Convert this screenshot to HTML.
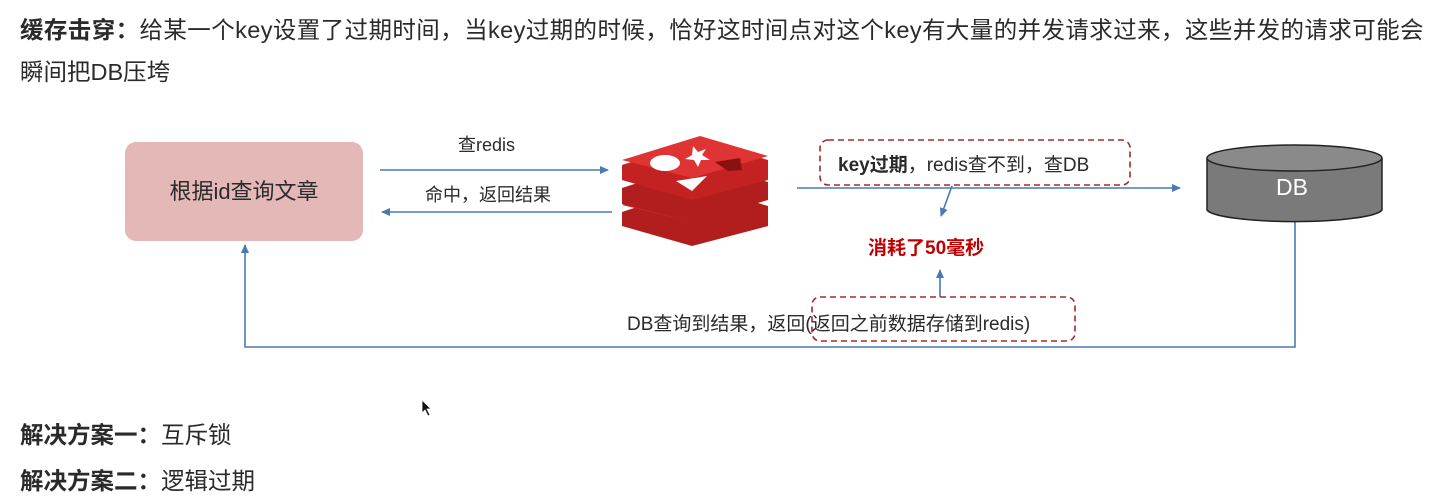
<!DOCTYPE html>
<html><head><meta charset="utf-8"><style>
body{margin:0;width:1444px;height:503px;background:#fff;position:relative;overflow:hidden;font-family:"Liberation Sans","Noto Sans CJK SC",sans-serif;color:#2a2a2a}
.t{position:absolute;white-space:nowrap}
.big{font-size:23.5px}
b{font-weight:bold;color:#2a2a2a}
</style></head><body>
<div class="t big" style="left:20px;top:11px;letter-spacing:0.4px">
<b>缓存击穿：</b>给某一个key设置了过期时间，当key过期的时候，恰好这时间点对这个key有大量的并发请求过来，这些并发的请求可能会</div>
<div class="t big" style="left:20px;top:53px;">瞬间把DB压垮</div>

<svg width="1444" height="503" style="position:absolute;left:0;top:0">
<defs>
<marker id="a" markerWidth="10" markerHeight="10" refX="8" refY="5" orient="auto" markerUnits="userSpaceOnUse"><path d="M0,1 L9,5 L0,9z" fill="#4a7ab5"/></marker>
</defs>
<rect x="125" y="142" width="238" height="99" rx="11" fill="#e5b8b8"/>
<g stroke="#4a7ab5" stroke-width="1.6" fill="none">
<line x1="380" y1="170" x2="608" y2="170" marker-end="url(#a)"/>
<line x1="612" y1="212" x2="382" y2="212" marker-end="url(#a)"/>
<line x1="797" y1="188" x2="1180" y2="188" marker-end="url(#a)"/>
<line x1="952" y1="186" x2="941" y2="216" marker-end="url(#a)"/>
<line x1="940" y1="297" x2="940" y2="270" marker-end="url(#a)"/>
<polyline points="1295,222 1295,347 245,347 245,245" marker-end="url(#a)"/>
</g>
<rect x="820" y="140" width="310" height="45" rx="8" fill="none" stroke="#a52a2a" stroke-width="1.6" stroke-dasharray="6,4"/>
<rect x="812" y="297" width="263" height="44" rx="8" fill="none" stroke="#a52a2a" stroke-width="1.6" stroke-dasharray="6,4"/>
<path d="M1207,158 L1207,210 A88,13 0 0 0 1382,210 L1382,158" fill="#7a7a7a" stroke="#222" stroke-width="1.5"/>
<ellipse cx="1294.5" cy="158" rx="87.5" ry="13" fill="#8a8a8a" stroke="#222" stroke-width="1.5"/>
<g>
<path d="M622,212 L700,186 L768,206 L768,226 L692,246 L622,226z" fill="#b21d1d"/>
<path d="M622,205 L700,180 L768,198 L692,222 z" fill="#d82c2c"/>
<path d="M622,188 L700,163 L768,182 L768,200 L692,222 L622,204z" fill="#b21d1d"/>
<path d="M622,180 L700,156 L768,175 L692,198 z" fill="#d82c2c"/>
<path d="M622,165 L700,140 L768,160 L768,180 L692,200 L622,180z" fill="#c42222"/>
<path d="M622,160 L700,136 L768,156 L692,178 z" fill="#e03434"/>
<ellipse cx="665" cy="163" rx="15" ry="8" fill="#fff"/>
<path d="M676,181 L707,176 L692,191z" fill="#fff"/>
<path d="M693,146 L698,152 L706,149 L702,155 L710,160 L701,160 L698,167 L694,160 L685,159 L692,155z" fill="#fff"/>
<path d="M715,162 L740,158 L742,170 L728,171z" fill="#8b1010"/>
</g>
</svg>

<div class="t" style="left:125px;top:142px;width:238px;height:99px;line-height:99px;text-align:center;font-size:22px">根据id查询文章</div>
<div class="t" style="left:458px;top:131px;font-size:18px">查redis</div>
<div class="t" style="left:425px;top:181px;font-size:18px">命中，返回结果</div>
<div class="t" style="left:838px;top:150px;font-size:19px"><b>key过期</b>，redis查不到，查DB</div>
<div class="t" style="left:868px;top:233px;font-size:19px;font-weight:bold;color:#c00000">消耗了50毫秒</div>
<div class="t" style="left:1276px;top:174px;font-size:23px;color:#fff">DB</div>
<div class="t" style="left:627px;top:309px;font-size:19px">DB查询到结果，返回(返回之前数据存储到redis)</div>
<div class="t big" style="left:20px;top:416px;"><b>解决方案一：</b>互斥锁</div>
<div class="t big" style="left:20px;top:462px;"><b>解决方案二：</b>逻辑过期</div>
<svg width="12" height="18" style="position:absolute;left:421px;top:399px"><path d="M1,1 L1,14 L4,11 L7,17 L9,16 L6,10 L10,10z" fill="#111" stroke="#fff" stroke-width="0.8"/></svg>
</body></html>
